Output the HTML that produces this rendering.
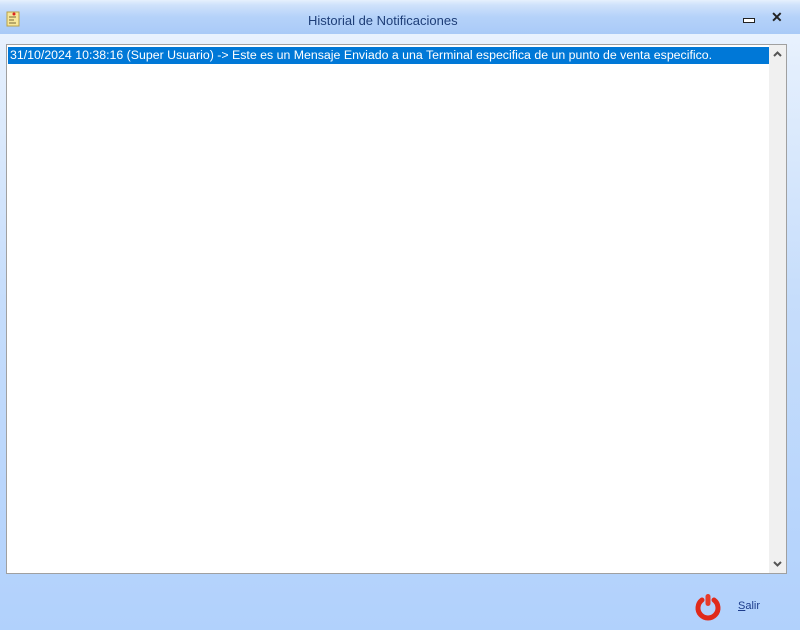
<!DOCTYPE html>
<html><head><style>
body{margin:0;width:800px;height:630px;overflow:hidden;font-family:"Liberation Sans",sans-serif;}
.win{position:absolute;left:0;top:0;width:800px;height:630px;background:linear-gradient(#eef5ff 0px,#e4effd 60px,#c6ddfb 300px,#b1d1fc 630px);}
.title{position:absolute;left:0;top:0;width:800px;height:34px;background:linear-gradient(#e6f0fd 0,#cfe2fb 5px,#b5d2f9 17px,#a9caf7 34px);}
.tt{position:absolute;left:308px;top:13px;font-size:13px;color:#1e3e78;white-space:nowrap;}
.list{position:absolute;left:6px;top:44px;width:779px;height:528px;border:1px solid #a0a0a0;background:#fff;}
.sel{position:absolute;left:1px;top:2px;width:761px;height:17px;background:#0078d7;color:#fff;font-size:12.35px;line-height:17px;padding-left:2px;box-sizing:border-box;white-space:nowrap;}
.sb{position:absolute;right:0;top:0;width:17px;height:528px;background:#f0f0f0;}
.salir{position:absolute;left:738px;top:600px;font-size:11px;color:#1c3c8c;}
</style></head><body>
<div class="win">
<div class="title">
<svg style="position:absolute;left:6px;top:11px" width="14" height="16" viewBox="0 0 14 16"><rect x="1" y="1" width="12" height="14" fill="#f7e79a" stroke="#b8a04a"/><line x1="3" y1="6" x2="10" y2="6" stroke="#7a6a3a"/><line x1="3" y1="9" x2="8" y2="9" stroke="#7a6a3a"/><line x1="3" y1="12" x2="10" y2="12" stroke="#7a6a3a"/><circle cx="8" cy="3" r="1.5" fill="#d22"/></svg>
<div class="tt">Historial de Notificaciones</div>
<div style="position:absolute;left:743px;top:18px;width:10px;height:3px;border:1px solid #222;background:#fff"></div>
<div style="position:absolute;left:771px;top:9px;font-size:14px;color:#222;font-weight:bold;">✕</div>
</div>
<div class="list">
<div class="sel">31/10/2024 10:38:16 (Super Usuario) -&gt; Este es un Mensaje Enviado a una Terminal especifica de un punto de venta especifico.</div>
<div class="sb">
<svg style="position:absolute;left:4px;top:6px" width="9" height="6"><path d="M1 5L4.5 1.5L8 5" stroke="#555" stroke-width="2" fill="none"/></svg>
<svg style="position:absolute;left:4px;top:516px" width="9" height="6"><path d="M1 1L4.5 4.5L8 1" stroke="#555" stroke-width="2" fill="none"/></svg>
</div>
</div>
<svg style="position:absolute;left:694px;top:592px" width="28" height="30" viewBox="0 0 28 30"><path d="M8 8A10 10 0 1 0 20 8" stroke="#e02a1a" stroke-width="5" fill="none" stroke-linecap="round"/><rect x="11.5" y="2" width="5" height="12" rx="2.5" fill="#e83a28"/></svg>
<div class="salir"><u>S</u>alir</div>
</div>
</body></html>
